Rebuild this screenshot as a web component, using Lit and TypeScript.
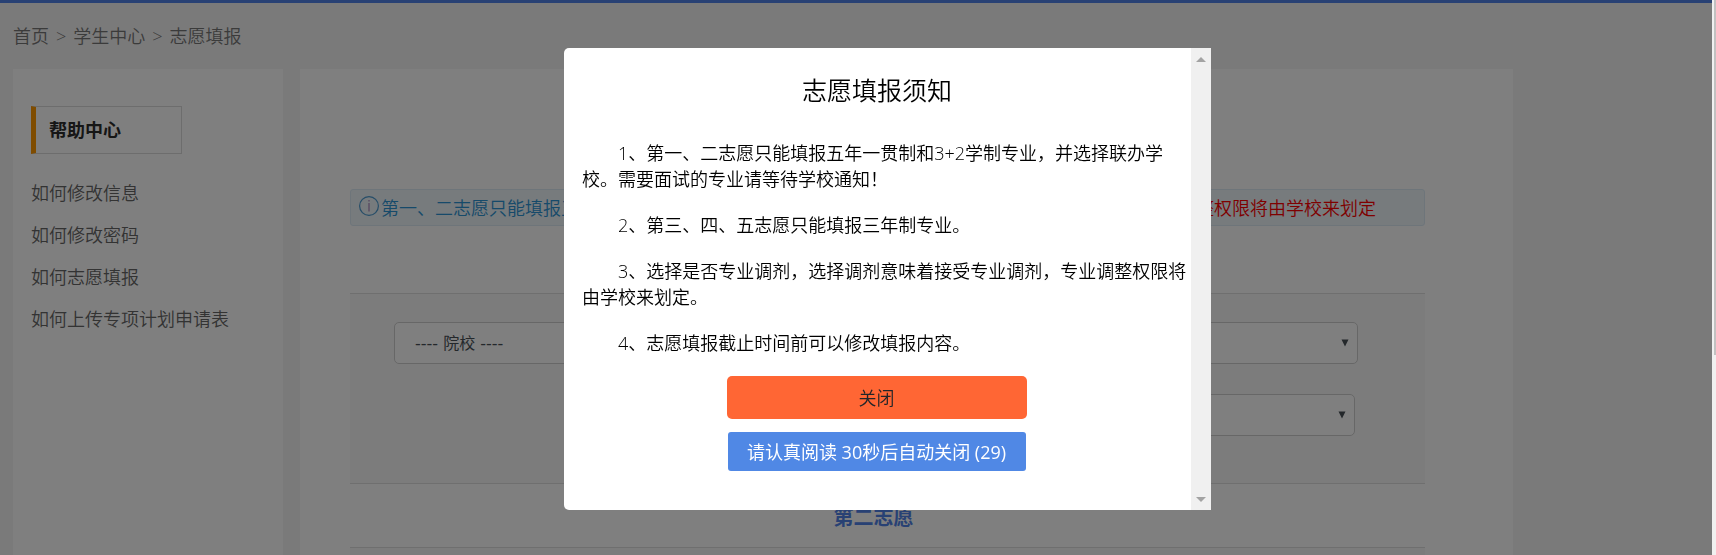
import { LitElement, html, css } from "lit";
import { customElement, property, state } from "lit/decorators.js";

@customElement("choice-select")
class ChoiceSelect extends LitElement {
  @property() label = "";
  @property() placeholder = "";

  static styles = css`
    :host { display: block; }
    .wrap {
      display: grid;
      grid-template-columns: 1fr auto;
      align-items: center;
      border: 1px solid #cfcfcf;
      border-radius: 5px;
      background: #fff;
    }
    .field {
      grid-area: 1 / 1 / 2 / 3;
      width: 100%;
      height: 40px;
      padding: 0 20px;
      border: 0;
      background: transparent;
      appearance: none;
      color: #495057;
      font-family: "DejaVu Sans", "Noto Sans CJK SC", sans-serif;
      font-size: 16px;
      font-weight: 400;
    }
    .arrow {
      grid-area: 1 / 2;
      margin-right: 8px;
      fill: #495057;
      pointer-events: none;
    }
  `;

  render() {
    return html`
      <div class="wrap">
        <select class="field" aria-label=${this.label}>
          <option>${this.placeholder}</option>
        </select>
        <svg class="arrow" width="8" height="8" viewBox="0 0 8 8"><path d="M0.5 0.5H7.5L4 7.5Z" /></svg>
      </div>
    `;
  }
}

@customElement("notice-dialog")
class NoticeDialog extends LitElement {
  @property({ type: Number }) remaining = 29;

  static styles = css`
    :host {
      display: flex;
      width: 647px;
      border-radius: 5px 0 0 5px;
      overflow: hidden;
      background: #fff;
      color: #000;
    }
    .content {
      flex: 1;
      display: flex;
      flex-direction: column;
      align-items: center;
      padding: 25px 3px 39px 18px;
    }
    .title {
      margin: 0 16px 33px 0;
      font-size: 25px;
      font-weight: 350;
      line-height: 34px;
    }
    .rule {
      align-self: stretch;
      margin: 0 0 20px;
      font-size: 18px;
      line-height: 26px;
      text-indent: 2em;
    }
    .actions {
      display: flex;
      flex-direction: column;
      align-items: center;
      gap: 13px;
      margin-right: 17px;
    }
    .btn {
      padding: 0;
      border: 0;
      font: inherit;
      font-size: 18px;
      cursor: pointer;
    }
    .close {
      width: 300px;
      height: 43px;
      border-radius: 5px;
      background: #ff6634;
      color: #212529;
    }
    .timer {
      width: 298px;
      height: 39px;
      border-radius: 3px;
      background: #5088e5;
      color: #fff;
      font-weight: 400;
    }
    .track {
      display: flex;
      flex-direction: column;
      justify-content: space-between;
      align-items: center;
      width: 20px;
      padding: 9px 0 8px;
      background: #f0f0f0;
      box-sizing: border-box;
    }
    .tip { display: block; fill: #a3a3a3; }
  `;

  private close() {
    this.dispatchEvent(new CustomEvent("dismiss"));
  }

  render() {
    return html`
      <div class="content">
        <h2 class="title">志愿填报须知</h2>
        <p class="rule">1、第一、二志愿只能填报五年一贯制和3+2学制专业，并选择联办学校。需要面试的专业请等待学校通知！</p>
        <p class="rule">2、第三、四、五志愿只能填报三年制专业。</p>
        <p class="rule">3、选择是否专业调剂，选择调剂意味着接受专业调剂，专业调整权限将由学校来划定。</p>
        <p class="rule">4、志愿填报截止时间前可以修改填报内容。</p>
        <div class="actions">
          <button class="btn close" @click=${this.close}>关闭</button>
          <button class="btn timer">请认真阅读 30秒后自动关闭 (${this.remaining})</button>
        </div>
      </div>
      <div class="track">
        <svg class="tip" width="10" height="5" viewBox="0 0 10 5"><path d="M0 5L5 0L10 5Z" /></svg>
        <svg class="tip" width="10" height="5" viewBox="0 0 10 5"><path d="M0 0L5 5L10 0Z" /></svg>
      </div>
    `;
  }
}

@customElement("app-root")
class AppRoot extends LitElement {
  @state() private open = true;

  private crumbs = ["首页", "学生中心", "志愿填报"];
  private links = ["如何修改信息", "如何修改密码", "如何志愿填报", "如何上传专项计划申请表"];

  static styles = css`
    :host {
      display: block;
      height: 100vh;
      overflow: hidden;
      background: #f4f4f4;
      color: #555;
      font-family: "Open Sans", "Noto Sans CJK SC", sans-serif;
      font-size: 18px;
      font-weight: 350;
      line-height: 26px;
    }
    .page {
      border-top: 3px solid #5083e8;
      padding: 0 17px 0 13px;
    }
    .crumbs {
      display: flex;
      gap: 7px;
      padding: 20px 0;
    }
    .crumb { color: #777; text-decoration: none; }
    .columns {
      display: flex;
      gap: 17px;
      max-width: 1500px;
    }
    .side {
      flex: 0 0 270px;
      min-height: 100vh;
      padding: 37px 18px 0;
      background: #fff;
      box-sizing: border-box;
    }
    .side-title {
      width: 151px;
      margin: 0 0 18px;
      padding: 10px 13px;
      border: 1px solid #dadada;
      border-left: 5px solid #ff9800;
      box-sizing: border-box;
      color: #2c2c2c;
      font-size: 18px;
      font-weight: 700;
    }
    .links { margin: 0; padding: 0; list-style: none; }
    .link {
      display: block;
      padding: 8px 0;
      color: #666;
      text-decoration: none;
    }
    .main {
      flex: 1;
      padding: 120px 88px 0 50px;
      background: #fff;
    }
    .alert {
      display: flex;
      align-items: center;
      gap: 2px;
      height: 35px;
      padding: 0 48px 0 8px;
      border: 1px solid #dcebf5;
      border-radius: 3px;
      background: #eef6fb;
      color: #2c94d4;
      white-space: nowrap;
    }
    .info { flex: none; margin-bottom: 4px; }
    .warn { margin-left: auto; color: #f00; }
    .group {
      display: flex;
      flex-direction: column;
      gap: 30px;
      height: 189px;
      padding: 28px 67px 0 44px;
      border-top: 1px solid #dedede;
      border-bottom: 1px solid #dedede;
      background: #f8f8f8;
      box-sizing: border-box;
    }
    .first { margin-top: 67px; height: 191px; }
    .second-row { width: 72%; margin: 0 3px 0 auto; }
    .heading {
      margin: 0;
      padding: 21px 28px 16px 0;
      color: #5083e8;
      font-size: 20px;
      font-weight: 700;
      text-align: center;
    }
    .overlay {
      position: fixed;
      inset: 0;
      display: flex;
      align-items: flex-start;
      justify-content: center;
      padding: 48px 0 0 59px;
      background: rgba(0, 0, 0, 0.5);
    }
    .scroll {
      position: fixed;
      inset: 0 0 0 auto;
      width: 4px;
      background: #f0f0f0;
    }
    .thumb { height: 64%; margin-left: 2px; background: #c1c1c1; }
  `;

  render() {
    return html`
      <div class="page">
        <nav class="crumbs">
          ${this.crumbs.map((c, i) => html`${i ? html`<span class="crumb">&gt;</span>` : ""}<a class="crumb" href="#">${c}</a>`)}
        </nav>
        <div class="columns">
          <aside class="side">
            <h3 class="side-title">帮助中心</h3>
            <ul class="links">
              ${this.links.map((l) => html`<li><a class="link" href="#">${l}</a></li>`)}
            </ul>
          </aside>
          <main class="main">
            <div class="alert">
              <svg class="info" width="20" height="20" viewBox="0 0 20 20" fill="none" stroke="#4d9bd0">
                <circle cx="10" cy="10" r="9.4" stroke-width="1.2" />
                <path d="M10 7V15.5M10 4V5.5" stroke="#b08fc0" stroke-width="1.3" />
              </svg>
              <span>第一、二志愿只能填报五年一贯制</span>
              <span class="warn">专业调整权限将由学校来划定</span>
            </div>
            <section class="group first">
              <choice-select label="院校" placeholder="---- 院校 ----"></choice-select>
              <choice-select class="second-row" label="专业" placeholder="---- 专业 ----"></choice-select>
            </section>
            <h3 class="heading">第二志愿</h3>
            <section class="group"></section>
          </main>
        </div>
      </div>
      ${this.open
        ? html`<div class="overlay">
            <notice-dialog role="dialog" aria-label="志愿填报须知" @dismiss=${() => (this.open = false)}></notice-dialog>
          </div>`
        : ""}
      <div class="scroll"><div class="thumb"></div></div>
    `;
  }
}
